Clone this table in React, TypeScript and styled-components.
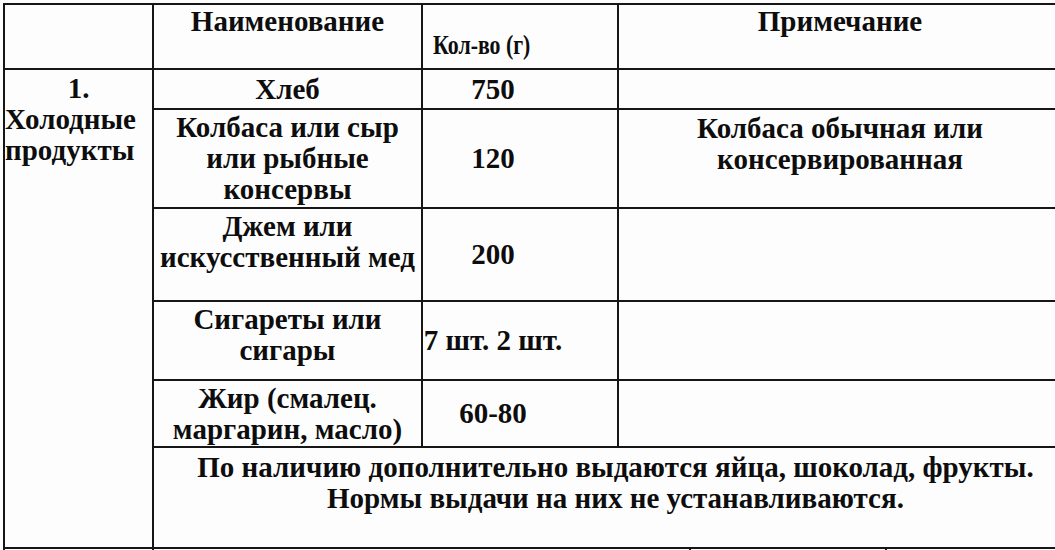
import React from "react";
import styled, { createGlobalStyle } from "styled-components";

const Global = createGlobalStyle`
  html, body { margin: 0; padding: 0; background: #fdfdfd; }
  body { font-family: "Liberation Serif", "Times New Roman", serif; color: #0d0d0d; overflow: hidden; }
`;

const Page = styled.div`
  width: 1055px;
  height: 550px;
  overflow: hidden;
  padding: 3px 0 0 3px;
  box-sizing: border-box;
`;

const Table = styled.table`
  border-collapse: collapse;
  table-layout: fixed;
  width: 1058px;
  font-family: "Liberation Serif", "Times New Roman", serif;
  font-weight: 700;
  font-size: 29px;
  line-height: 31px;
  color: #0d0d0d;
`;

const Row = styled.tr<{ $h: number }>`
  height: ${(p) => p.$h}px;
`;

const Cell = styled.td<{
  $align?: "left" | "center";
  $valign?: "top" | "middle";
  $pt?: number;
  $pl?: number;
  $pr?: number;
}>`
  border: 2px solid #161616;
  padding: ${(p) => p.$pt ?? 0}px ${(p) => p.$pr ?? 0}px 0 ${(p) => p.$pl ?? 0}px;
  text-align: ${(p) => p.$align ?? "center"};
  vertical-align: ${(p) => p.$valign ?? "top"};
  box-sizing: border-box;
`;

const OpenCell = styled(Cell)`
  border-top: none;
`;

const Narrow = styled.span`
  display: inline-block;
  font-size: 28px;
  white-space: nowrap;
  transform: scaleX(0.78);
  transform-origin: left center;
`;

const Line = styled.div<{ $align?: "left" | "center" }>`
  text-align: ${(p) => p.$align ?? "center"};
  white-space: nowrap;
`;

const Qty = styled(Cell)`
  padding-right: 54px;
  white-space: nowrap;
`;

const items = [
  { h: 99, name: ["Колбаса или сыр", "или рыбные", "консервы"], qty: "120", note: ["Колбаса обычная или", "консервированная"] },
  { h: 93, name: ["Джем или", "искусственный мед"], qty: "200", note: [] },
  { h: 79, name: ["Сигареты или", "сигары"], qty: "7 шт. 2 шт.", note: [] },
  { h: 67, name: ["Жир (смалец.", "маргарин, масло)"], qty: "60-80", note: [] },
];

export default function App() {
  return (
    <>
      <Global />
      <Page>
        <Table>
          <colgroup>
            <col style={{ width: 149 }} />
            <col style={{ width: 269 }} />
            <col style={{ width: 196 }} />
            <col style={{ width: 444 }} />
          </colgroup>
          <tbody>
            <Row $h={65}>
              <Cell />
              <Cell $pt={1}>Наименование</Cell>
              <Cell $align="left" $valign="middle" $pl={10} $pt={16}>
                <Narrow>Кол-во (г)</Narrow>
              </Cell>
              <Cell $pt={1}>Примечание</Cell>
            </Row>
            <Row $h={40}>
              <Cell rowSpan={6} $align="left" $pt={3} $pl={0}>
                <Line>1.</Line>
                <Line $align="left">Холодные</Line>
                <Line $align="left">продукты</Line>
              </Cell>
              <Cell $valign="middle">Хлеб</Cell>
              <Qty $valign="middle">750</Qty>
              <Cell />
            </Row>
            {items.map((it) => (
              <Row key={it.qty} $h={it.h}>
                <Cell $pt={2}>
                  {it.name.map((l) => (
                    <Line key={l}>{l}</Line>
                  ))}
                </Cell>
                <Qty $valign="middle">{it.qty}</Qty>
                <Cell $pt={3}>
                  {it.note.map((l) => (
                    <Line key={l}>{l}</Line>
                  ))}
                </Cell>
              </Row>
            ))}
            <Row $h={101}>
              <Cell colSpan={3} $pt={4} $pl={16}>
                <Line>По наличию дополнительно выдаются яйца, шоколад, фрукты.</Line>
                <Line>Нормы выдачи на них не устанавливаются.</Line>
              </Cell>
            </Row>
          </tbody>
        </Table>
        <Table>
          <colgroup>
            <col style={{ width: 149 }} />
            <col style={{ width: 537 }} />
            <col style={{ width: 196 }} />
            <col style={{ width: 176 }} />
          </colgroup>
          <tbody>
            <Row $h={40}>
              <OpenCell />
              <OpenCell />
              <OpenCell />
              <OpenCell />
            </Row>
          </tbody>
        </Table>
      </Page>
    </>
  );
}
